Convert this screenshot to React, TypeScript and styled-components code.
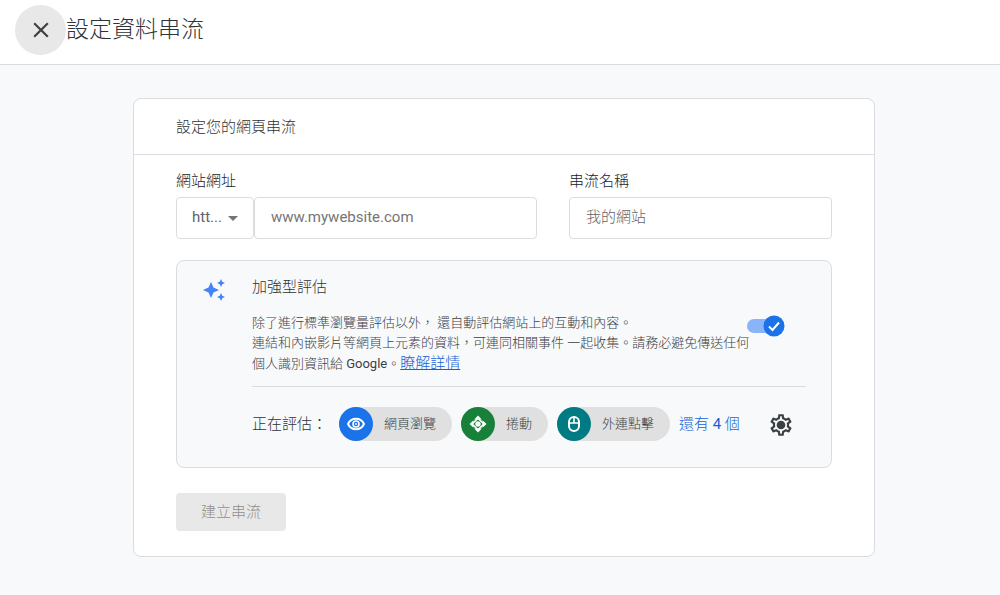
import React from "react";
import styled, { createGlobalStyle } from "styled-components";
import {
  MdAutoAwesome,
  MdClose,
  MdOutlineSettings,
} from "react-icons/md";

const GlobalStyle = createGlobalStyle`
  *, *::before, *::after { box-sizing: border-box; }
  body {
    margin: 0;
    background: #f8f9fb;
    color: #303336;
    font-family: Roboto, "Noto Sans CJK TC", sans-serif;
    font-size: 15px;
    font-weight: 300;
    line-height: 20px;
  }
  button, input, select { font: inherit; color: inherit; margin: 0; }
`;

const TopBar = styled.header`
  display: flex;
  align-items: center;
  height: 65px;
  padding: 0 15px 5px;
  background: #fff;
  border-bottom: 1px solid #dadce0;
`;

const CloseButton = styled.button`
  display: grid;
  place-items: center;
  width: 51px;
  height: 50px;
  padding: 0;
  border: 0;
  border-radius: 50%;
  background: #e8e8e8;
  color: #3c4043;
`;

const Title = styled.h1`
  margin: 0;
  font-size: 23px;
  font-weight: 300;
  line-height: 32px;
`;

const Main = styled.main`
  padding: 33px 125px 38px 133px;
`;

const Card = styled.section`
  background: #fff;
  border: 1px solid #dadce0;
  border-radius: 8px;
`;

const CardTitle = styled.h2`
  margin: 0;
  padding: 18px 42px 17px;
  border-bottom: 1px solid #dadce0;
  font-size: 15px;
  font-weight: 300;
  line-height: 20px;
`;

const Form = styled.form`
  padding: 16px 42px 25px;
`;

const Fields = styled.div`
  display: grid;
  grid-template-columns: 361fr 263fr;
  column-gap: 32px;
`;

const Field = styled.div`
  display: flex;
  flex-direction: column;
  gap: 6px;
  min-width: 0;
`;

const Label = styled.label`
  color: #202124;
`;

const InputGroup = styled.div`
  display: flex;
`;

const SelectBox = styled.div`
  display: grid;
  grid-template-columns: 1fr;
  align-items: center;
  flex: none;
  width: 78px;

  & > * { grid-area: 1 / 1; }
  & > svg { justify-self: end; margin-right: 16px; pointer-events: none; }
`;

const Select = styled.select`
  appearance: none;
  width: 100%;
  height: 42px;
  padding: 0 0 2px 15px;
  border: 1px solid #dadce0;
  border-radius: 4px;
  background: #fff;
  color: #5f6368;
  font-weight: 400;
`;

const TextInput = styled.input`
  flex: 1;
  width: 100%;
  min-width: 0;
  height: 42px;
  padding: 0 16px 2px;
  border: 1px solid #dadce0;
  border-radius: 4px;
  background: #fff;

  &::placeholder { color: #757575; opacity: 1; font-weight: 400; }
`;

const StreamNameInput = styled(TextInput)`
  &::placeholder { color: #5f6368; font-weight: 300; }
`;

const Panel = styled.section`
  display: grid;
  grid-template-columns: 24px minmax(0, 1fr);
  column-gap: 26px;
  margin-top: 21px;
  padding: 16px 25px 26px;
  background: #f8f9fb;
  border: 1px solid #dadce0;
  border-radius: 8px;

  & > svg { margin-top: 1px; color: #4285f4; }
`;

const PanelTitle = styled.h3`
  margin: 0 0 16px;
  font-size: 15px;
  font-weight: 300;
  line-height: 20px;
`;

const Summary = styled.div`
  display: flex;
  padding-bottom: 12px;
  border-bottom: 1px solid #dadce0;
`;

const Description = styled.p`
  flex: 1;
  min-width: 0;
  margin: 0;
  color: #3c4043;
  font-size: 13px;
  white-space: nowrap;
`;

const Latin = styled.span`
  font-weight: 400;
`;

const Link = styled.a<{ $underlined?: boolean }>`
  color: #1662d4;
  font-size: 15px;
  text-decoration: ${(p) => (p.$underlined ? "underline" : "none")};
  white-space: nowrap;
`;

const Switch = styled.label`
  display: grid;
  align-items: center;
  flex: none;
  width: 38px;
  height: 22px;
  margin: 2px 21px 0 0;

  & > * { grid-area: 1 / 1; }
`;

const SwitchInput = styled.input`
  appearance: none;
  width: 36px;
  height: 14px;
  margin: 0;
  border-radius: 7px;
  background: #8ab4f8;
`;

const Thumb = styled.svg`
  justify-self: end;
  pointer-events: none;
`;

const Metrics = styled.div`
  display: flex;
  align-items: center;
  padding-top: 20px;
  white-space: nowrap;
`;

const MetricsLabel = styled.span`
  flex: none;
  width: 87px;
`;

const Chips = styled.ul`
  display: flex;
  gap: 9px;
  margin: 0 9px 0 0;
  padding: 0;
  list-style: none;
`;

const Chip = styled.li`
  display: flex;
  align-items: center;
  gap: 11px;
  height: 34px;
  padding-right: 16px;
  border-radius: 17px;
  background: #e0e0e0;
  color: #3c4043;
  font-size: 13px;
`;

const ChipIcon = styled.span<{ $color: string }>`
  display: grid;
  place-items: center;
  width: 34px;
  height: 34px;
  border-radius: 50%;
  background: ${(p) => p.$color};
  color: #fff;
`;

const SettingsButton = styled.button`
  display: grid;
  place-items: center;
  width: 26px;
  height: 26px;
  margin: 2px 12px 0 auto;
  padding: 0;
  border: 0;
  background: none;
  color: #3c4043;
`;

const SubmitButton = styled.button`
  display: block;
  height: 38px;
  margin-top: 25px;
  padding: 0 25px;
  border: 0;
  border-radius: 4px;
  background: #e8e8e8;

  &:disabled { color: #909090; }
`;

const EyeIcon = () => (
  <svg width="20" height="20" viewBox="0 0 20 20" fill="none" stroke="currentColor" strokeWidth="2" aria-hidden="true">
    <path d="M2 10c1.600-3.400 4.600-5.200 8-5.200s6.400 1.800 8 5.200c-1.600 3.400-4.600 5.200-8 5.200S3.600 13.400 2 10z" />
    <circle cx="10" cy="10" r="3" strokeWidth="1.600" />
    <circle cx="10" cy="10" r="1" fill="currentColor" stroke="none" />
  </svg>
);

const ScrollIcon = () => (
  <svg width="18" height="18" viewBox="0 0 18 18" fill="currentColor" aria-hidden="true">
    <path d="M9 0.500l3.800 4H5.200zM9 17.500l-3.800-4h7.600zM0.500 9l4-3.800v7.600zM17.500 9l-4 3.800V5.200z" />
    <path d="M9 3.200L14.800 9 9 14.800 3.200 9z" fill="none" stroke="currentColor" strokeWidth="1.600" />
    <circle cx="9" cy="9" r="2.700" />
  </svg>
);

const MouseIcon = () => (
  <svg width="18" height="18" viewBox="0 0 18 18" fill="none" stroke="currentColor" strokeWidth="2" aria-hidden="true">
    <rect x="4" y="2" width="10" height="14" rx="5" />
    <path d="M4 8h10M9 2v6" strokeWidth="1.600" />
  </svg>
);

const GearIcon = () => (
  <svg width="26" height="26" viewBox="0 0 24 24" fill="currentColor" aria-hidden="true">
    <MdOutlineSettings size={24} />
    <circle cx="12" cy="12" r="3" />
  </svg>
);

const chips = [
  { label: "網頁瀏覽", color: "#1a73e8", icon: <EyeIcon /> },
  { label: "捲動", color: "#188038", icon: <ScrollIcon /> },
  { label: "外連點擊", color: "#007b83", icon: <MouseIcon /> },
];

export default function App() {
  return (
    <>
      <GlobalStyle />
      <TopBar>
        <CloseButton type="button" aria-label="關閉">
          <MdClose size={26} />
        </CloseButton>
        <Title>設定資料串流</Title>
      </TopBar>
      <Main>
        <Card>
          <CardTitle>設定您的網頁串流</CardTitle>
          <Form>
            <Fields>
              <Field>
                <Label htmlFor="site-url">網站網址</Label>
                <InputGroup>
                  <SelectBox>
                    <Select aria-label="通訊協定">
                      <option>htt...</option>
                    </Select>
                    <svg width="10" height="5" viewBox="0 0 10 5" fill="#757575" aria-hidden="true">
                      <path d="M0 0h10L5 5z" />
                    </svg>
                  </SelectBox>
                  <TextInput id="site-url" type="text" placeholder="www.mywebsite.com" />
                </InputGroup>
              </Field>
              <Field>
                <Label htmlFor="stream-name">串流名稱</Label>
                <StreamNameInput id="stream-name" type="text" placeholder="我的網站" />
              </Field>
            </Fields>
            <Panel>
              <MdAutoAwesome size={24} aria-hidden="true" />
              <div>
                <PanelTitle>加強型評估</PanelTitle>
                <Summary>
                  <Description>
                    除了進行標準瀏覽量評估以外， 還自動評估網站上的互動和內容。
                    <br />
                    連結和內嵌影片等網頁上元素的資料，可連同相關事件 一起收集。請務必避免傳送任何
                    <br />
                    個人識別資訊給 <Latin>Google</Latin>。
                    <Link href="#details" $underlined>瞭解詳情</Link>
                  </Description>
                  <Switch>
                    <SwitchInput type="checkbox" role="switch" aria-label="加強型評估" defaultChecked />
                    <Thumb width="22" height="22" viewBox="0 0 22 22" aria-hidden="true">
                      <circle cx="11" cy="11" r="10.500" fill="#1a73e8" />
                      <path d="M6 11.500l3.500 3.500L16 7.500" fill="none" stroke="#fff" strokeWidth="2" />
                    </Thumb>
                  </Switch>
                </Summary>
                <Metrics>
                  <MetricsLabel>正在評估：</MetricsLabel>
                  <Chips>
                    {chips.map((chip) => (
                      <Chip key={chip.label}>
                        <ChipIcon $color={chip.color}>{chip.icon}</ChipIcon>
                        {chip.label}
                      </Chip>
                    ))}
                  </Chips>
                  <Link href="#more">還有 <Latin>4</Latin> 個</Link>
                  <SettingsButton type="button" aria-label="設定">
                    <GearIcon />
                  </SettingsButton>
                </Metrics>
              </div>
            </Panel>
            <SubmitButton type="submit" disabled>建立串流</SubmitButton>
          </Form>
        </Card>
      </Main>
    </>
  );
}
